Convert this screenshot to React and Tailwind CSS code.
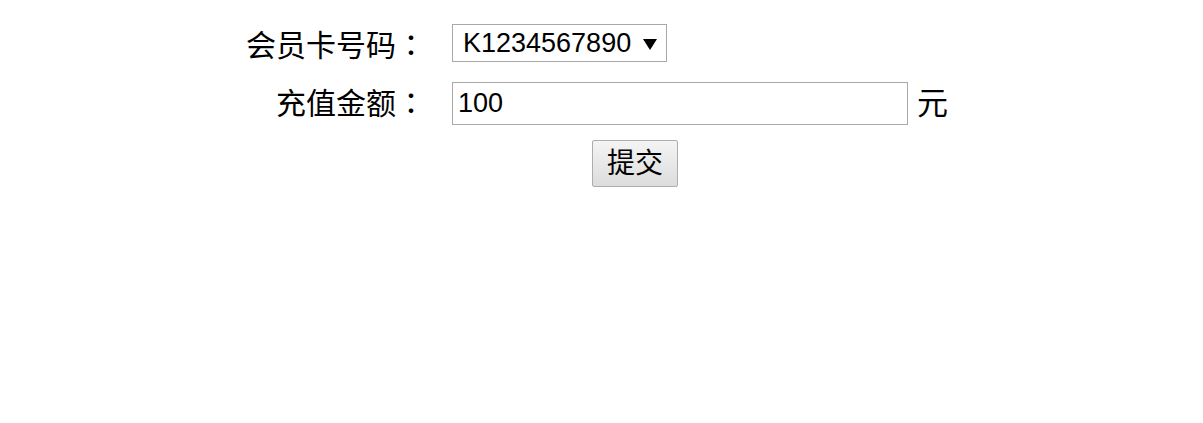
export default function App() {
  const cjk = "font-['Liberation_Sans','Noto_Sans_CJK_SC',sans-serif]";
  const colon = "font-['Noto_Sans_CJK_TC',sans-serif]";
  return (
    <div className={`w-[1203px] h-[423px] bg-white text-black ${cjk}`}>
      <form className="flex flex-col pt-[24px] pl-[226px]" onSubmit={(e) => e.preventDefault()}>
        <div className="flex items-center h-[38px]">
          <label className="w-[200px] text-right text-[30px] leading-none pt-[2px]">
            会员卡号码<span className={colon}>：</span>
          </label>
          <div className="ml-[26px] h-[38px] w-[215px] flex items-center justify-between border border-[#a9a9a9] bg-white pl-[10px] pr-[9px] text-[27px] leading-none">
            <span>K1234567890</span>
            <svg width="14" height="12" viewBox="0 0 14 12" className="mt-[1px]">
              <polygon points="0,1 14,1 7,12" fill="#000" />
            </svg>
          </div>
        </div>
        <div className="flex items-center h-[43px] mt-[20px]">
          <label className="w-[200px] text-right text-[30px] leading-none pb-[2px]">
            充值金额<span className={colon}>：</span>
          </label>
          <input
            className="ml-[26px] h-[43px] w-[456px] border border-[#a9a9a9] bg-white px-[5px] text-[27px] leading-none outline-none"
            defaultValue="100"
          />
          <span className="ml-[9px] text-[31px] leading-none pb-[1px]">元</span>
        </div>
        <div className="flex mt-[15px] pl-[366px]">
          <button
            type="submit"
            className="h-[47px] w-[86px] border border-[#adadad] rounded-[2px] bg-gradient-to-b from-[#f4f4f4] to-[#dcdcdc] text-[28px] leading-none"
          >
            提交
          </button>
        </div>
      </form>
    </div>
  );
}
